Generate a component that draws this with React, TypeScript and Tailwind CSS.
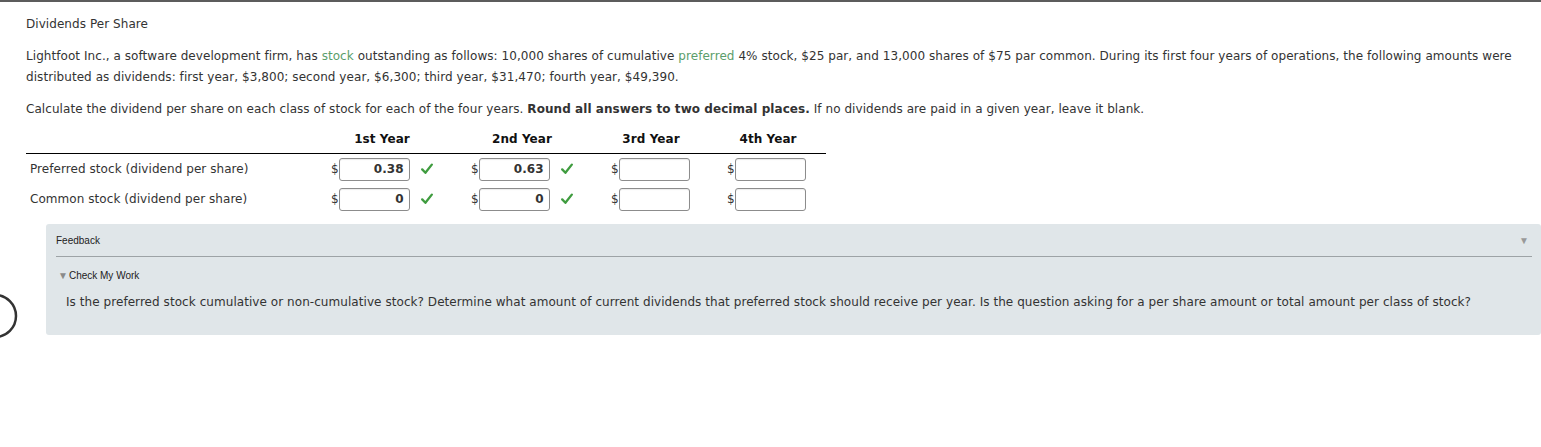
import React from 'react';

const years = ['1st Year', '2nd Year', '3rd Year', '4th Year'];
const colWidths = ['w-[140px]', 'w-[140px]', 'w-[118px]', 'w-[116px]'];

type Cell = { value: string; correct: boolean };

const rows: { label: string; cells: Cell[] }[] = [
  {
    label: 'Preferred stock (dividend per share)',
    cells: [
      { value: '0.38', correct: true },
      { value: '0.63', correct: true },
      { value: '', correct: false },
      { value: '', correct: false },
    ],
  },
  {
    label: 'Common stock (dividend per share)',
    cells: [
      { value: '0', correct: true },
      { value: '0', correct: true },
      { value: '', correct: false },
      { value: '', correct: false },
    ],
  },
];

const Check = () => (
  <svg width="12" height="12" viewBox="0 0 12 12" className="ml-[11px] shrink-0">
    <path d="M1.2 6.4 L4.4 9.8 L10.8 1.6" fill="none" stroke="#3f9c3f" strokeWidth="2.3" strokeLinecap="round" strokeLinejoin="round" />
  </svg>
);

const AmountCell: React.FC<{ cell: Cell; width: string; last?: boolean }> = ({ cell, width, last }) => (
  <div className={`${width} flex items-center ${last ? 'pl-[17px]' : 'pl-[19px]'}`}>
    <span className="text-[12px] text-[#333] leading-none">$</span>
    <div className="w-[71px] h-[23px] border border-[#8c8c8c] rounded-[3px] bg-white shadow-[inset_0_1px_1px_rgba(0,0,0,0.08)] flex items-center justify-end pr-[5px]">
      <span className="text-[12px] font-bold text-[#333]">{cell.value}</span>
    </div>
    {cell.correct && <Check />}
  </div>
);

export default function App() {
  return (
    <div className="relative min-h-[447px] w-full bg-white border-t-2 border-[#5c5c5c] font-['DejaVu_Sans',sans-serif] text-[12px] leading-[21px] tracking-[0.06px] text-[#333]">
      <svg width="20" height="52" viewBox="0 0 20 52" className="absolute left-0 top-[289px]">
        <circle cx="-5" cy="25" r="21" fill="none" stroke="#333" strokeWidth="2.5" />
      </svg>

      <div className="pl-[26px]">
        <div className="mt-[12px]">Dividends Per Share</div>

        <p className="mt-[11px] pr-[14px]">
          Lightfoot Inc., a software development firm, has <span className="text-[#5b9e6b]">stock</span> outstanding as follows: 10,000 shares of cumulative{' '}
          <span className="text-[#5b9e6b]">preferred</span> 4% stock, $25 par, and 13,000 shares of $75 par common. During its first four years of operations, the following amounts were distributed as dividends: first year, $3,800; second year, $6,300; third year, $31,470; fourth year, $49,390.
        </p>

        <p className="mt-[11px]">
          Calculate the dividend per share on each class of stock for each of the four years. <span className="font-bold">Round all answers to two decimal places.</span> If no dividends are paid in a given year, leave it blank.
        </p>

        <div className="w-[800px]">
          <div className="flex border-b border-black pt-[9px] pb-[3px]">
            <div className="w-[286px]" />
            {years.map((y, i) => (
              <div key={y} className={`${colWidths[i]} text-center font-bold text-[#111]`}>
                {y}
              </div>
            ))}
          </div>
          {rows.map((r) => (
            <div key={r.label} className="flex h-[30px] items-center">
              <div className="w-[286px] pl-[4px]">{r.label}</div>
              {r.cells.map((c, i) => (
                <AmountCell key={i} cell={c} width={colWidths[i]} last={i === 3} />
              ))}
            </div>
          ))}
        </div>

        <div className="mt-[10px] ml-[20px] rounded-[3px] bg-[#e0e6e9] pr-[9px] pl-[10px] pb-[22px]">
          <div className="flex items-center justify-between border-b border-[#9da3a6] pt-[11px] pb-[9px] font-['Liberation_Sans',Arial,sans-serif] text-[10px] leading-[12px] tracking-normal text-[#222]">
            <span>Feedback</span>
            <span className="mr-[3px] text-[10px] leading-[12px] text-[#999]">▼</span>
          </div>
          <div className="mt-[13px] flex items-center font-['Liberation_Sans',Arial,sans-serif] text-[10px] leading-[12px] tracking-normal text-[#222]">
            <span className="ml-[2px] mr-[1px] text-[10px] text-[#8a8a8a]">▼</span>
            <span>Check My Work</span>
          </div>
          <p className="mt-[10px] ml-[10px]">
            Is the preferred stock cumulative or non-cumulative stock? Determine what amount of current dividends that preferred stock should receive per year. Is the question asking for a per share amount or total amount per class of stock?
          </p>
        </div>
      </div>
    </div>
  );
}
